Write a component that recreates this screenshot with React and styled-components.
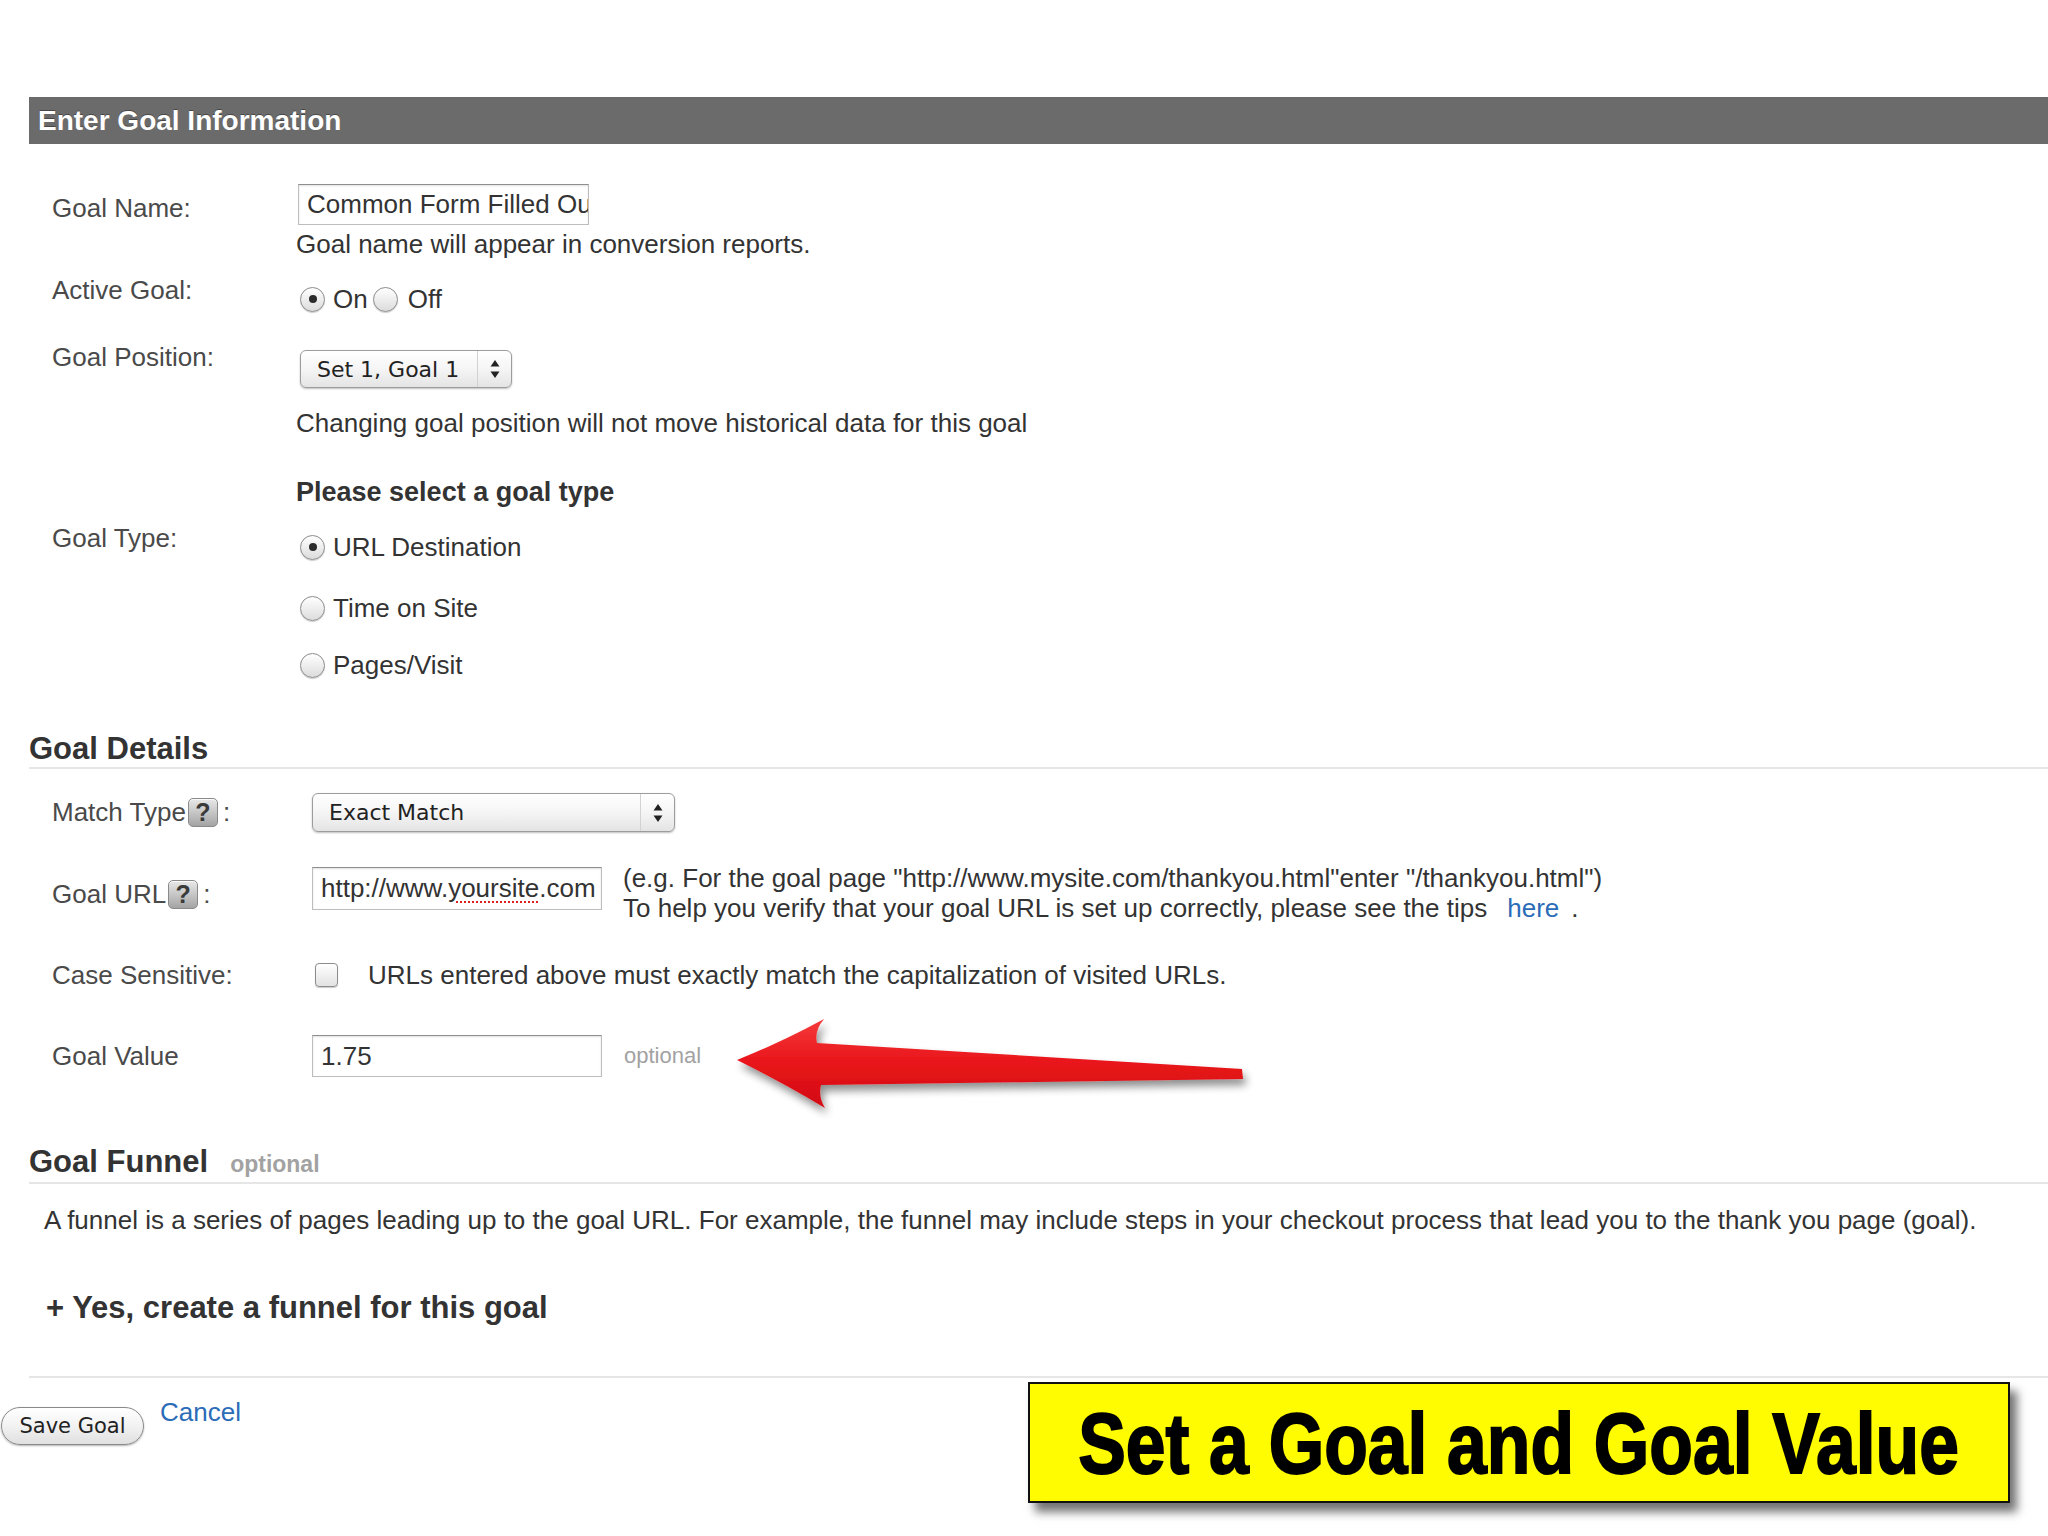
import React from 'react';
import styled, { createGlobalStyle } from 'styled-components';

const GlobalStyle = createGlobalStyle`
  html, body {
    margin: 0;
    padding: 0;
    background: #fff;
  }
  body {
    font-family: "Liberation Sans", Arial, sans-serif;
    color: #333;
  }
  * {
    box-sizing: border-box;
  }
`;

const Page = styled.div`
  position: relative;
  width: 2048px;
  height: 1536px;
  padding-top: 97px;
  overflow: hidden;
`;

const Content = styled.div`
  margin-left: 29px;
`;

const SectionBar = styled.div`
  height: 47px;
  background: #6b6b6b;
  color: #fff;
  font-size: 28px;
  font-weight: bold;
  display: flex;
  align-items: center;
  padding-left: 9px;
  text-shadow: 0 -1px 0 rgba(0, 0, 0, 0.35);
`;

const SectionTitle = styled.h2`
  margin: ${(p) => p.$top}px 0 0;
  font-size: 31px;
  line-height: 36px;
  font-weight: bold;
  color: #333;
  border-bottom: 2px solid #e6e6e6;
  display: flex;
  align-items: baseline;
  gap: 22px;
`;

const Optional = styled.span`
  font-size: ${(p) => (p.$bold ? 23 : 22)}px;
  font-weight: ${(p) => (p.$bold ? 'bold' : 'normal')};
  color: #a2a2a2;
`;

const Row = styled.div`
  display: grid;
  grid-template-columns: ${(p) => p.$labelWidth}px 1fr;
  margin-top: ${(p) => p.$top}px;
  padding-left: 23px;
`;

const Label = styled.div`
  display: flex;
  align-items: center;
  height: fit-content;
  padding-top: ${(p) => p.$offset || 0}px;
  font-size: 26px;
  line-height: 30px;
  color: #4a4a4a;
`;

const HelpIcon = styled.span`
  display: inline-flex;
  align-items: center;
  justify-content: center;
  width: 30px;
  height: 29px;
  margin: 2px 5px 0 2px;
  border: 1px solid #8a8a8a;
  border-radius: 5px;
  background: linear-gradient(#e8e8e8, #a4a4a4);
  box-shadow: inset 0 1px 0 rgba(255, 255, 255, 0.8);
  color: #3a3a3a;
  font-size: 25px;
  font-weight: bold;
  line-height: 1;
`;

const Control = styled.div`
  display: flex;
  flex-direction: column;
  align-items: flex-start;
`;

const Inline = styled.div`
  display: flex;
  align-items: ${(p) => p.$align || 'center'};
  margin-top: ${(p) => p.$top || 0}px;
`;

const Text = styled.div`
  margin-top: ${(p) => p.$top || 0}px;
  margin-left: ${(p) => p.$left || 0}px;
  font-size: ${(p) => p.$size || 26}px;
  line-height: ${(p) => p.$line || 30}px;
  font-weight: ${(p) => (p.$bold ? 'bold' : 'normal')};
  color: #333;
  white-space: nowrap;
`;

const Link = styled.a`
  color: #2b6cb8;
  text-decoration: none;
  margin: 0 ${(p) => p.$space || 0}px 0 ${(p) => p.$before || 0}px;
`;

const TextField = styled.div`
  display: flex;
  align-items: center;
  width: ${(p) => p.$width}px;
  height: ${(p) => p.$height}px;
  margin-left: ${(p) => p.$left || 0}px;
  padding: 0 8px;
  border: 1px solid #bdbdbd;
  border-top-color: #8e8e8e;
  box-shadow: inset 0 1px 2px rgba(0, 0, 0, 0.12);
  background: #fff;
  font-size: 26px;
  color: #333;
  white-space: nowrap;
  overflow: hidden;
`;

const Misspelled = styled.span`
  text-decoration: underline dotted #e02020;
  text-decoration-thickness: 2px;
  text-underline-offset: 4px;
`;

const Select = styled.div`
  display: flex;
  align-items: stretch;
  width: ${(p) => p.$width}px;
  height: ${(p) => p.$height}px;
  margin-top: ${(p) => p.$top || 0}px;
  margin-left: ${(p) => p.$left || 0}px;
  border: 1px solid #9c9c9c;
  border-radius: 6px;
  background: linear-gradient(#ffffff, #f5f5f5 50%, #e4e4e4);
  box-shadow: 0 1px 2px rgba(0, 0, 0, 0.25);
  font-family: "DejaVu Sans", Verdana, sans-serif;
  font-size: 22px;
  color: #222;
`;

const SelectValue = styled.span`
  flex: 1;
  display: flex;
  align-items: center;
  padding-left: 16px;
`;

const SelectArrows = styled.span`
  display: flex;
  align-items: center;
  justify-content: center;
  width: 34px;
  border-left: 1px solid #d2d2d2;
`;

const Radio = styled.span`
  display: inline-flex;
  align-items: center;
  justify-content: center;
  width: 25px;
  height: 25px;
  margin-left: ${(p) => p.$left || 0}px;
  margin-right: ${(p) => p.$right || 8}px;
  border: 1px solid #8c8c8c;
  border-radius: 50%;
  background: linear-gradient(#ffffff, #dcdcdc);
  box-shadow: 0 1px 1px rgba(0, 0, 0, 0.2);

  &::after {
    content: '';
    display: ${(p) => (p.$checked ? 'block' : 'none')};
    width: 8px;
    height: 8px;
    border-radius: 50%;
    background: #2b2b2b;
  }
`;

const Checkbox = styled.span`
  display: inline-block;
  width: 23px;
  height: 24px;
  margin-left: 3px;
  margin-right: 30px;
  border: 1px solid #8c8c8c;
  border-radius: 4px;
  background: linear-gradient(#ffffff, #e2e2e2);
  box-shadow: 0 1px 1px rgba(0, 0, 0, 0.2);
`;

const RadioLabel = styled.span`
  font-size: 26px;
  line-height: 30px;
  color: #333;
  margin-right: ${(p) => p.$right || 0}px;
`;

const Paragraph = styled.p`
  margin: ${(p) => p.$top}px 0 0;
  padding-left: ${(p) => p.$left}px;
  font-size: ${(p) => p.$size || 26}px;
  line-height: ${(p) => p.$line || 30}px;
  font-weight: ${(p) => (p.$bold ? 'bold' : 'normal')};
  color: #333;
  white-space: nowrap;
`;

const Divider = styled.hr`
  margin: ${(p) => p.$top}px 0 0;
  border: 0;
  border-top: 2px solid #e6e6e6;
`;

const Footer = styled.div`
  display: flex;
  align-items: flex-start;
  gap: 16px;
  margin-top: 29px;
  padding-left: 1px;
`;

const Button = styled.button`
  width: 143px;
  height: 38px;
  padding: 0;
  border: 1px solid #8a8a8a;
  border-radius: 19px;
  background: linear-gradient(#ffffff, #f2f2f2 50%, #e0e0e0);
  box-shadow: 0 1px 2px rgba(0, 0, 0, 0.3);
  font-family: "DejaVu Sans", Verdana, sans-serif;
  font-size: 21px;
  color: #222;
`;

const CancelLink = styled(Link)`
  margin-top: -10px;
  font-size: 26px;
  line-height: 30px;
`;

const ArrowOverlay = styled.svg`
  position: absolute;
  left: 720px;
  top: 1000px;
  width: 540px;
  height: 130px;
  overflow: visible;
`;

const Callout = styled.div`
  position: absolute;
  left: 1028px;
  top: 1382px;
  width: 982px;
  height: 121px;
  display: flex;
  align-items: center;
  justify-content: center;
  background: #fffb00;
  border: 2px solid #111;
  box-shadow: 7px 9px 9px rgba(0, 0, 0, 0.55);
`;

const CalloutText = styled.span`
  display: inline-block;
  font-family: "Liberation Sans", Arial, sans-serif;
  font-size: 86px;
  font-weight: bold;
  line-height: 1;
  color: #000;
  -webkit-text-stroke: 2px #000;
  transform: scaleX(0.83);
  white-space: nowrap;
`;

const UpDown = () => (
  <svg width="12" height="22" viewBox="0 0 12 22">
    <path d="M6 2 L10.5 8.5 H1.5 Z" fill="#222" />
    <path d="M6 20 L10.5 13.5 H1.5 Z" fill="#222" />
  </svg>
);

const RedArrow = () => (
  <ArrowOverlay viewBox="720 1000 540 130">
    <defs>
      <filter id="arrowShadow" x="-10%" y="-30%" width="130%" height="170%">
        <feGaussianBlur in="SourceAlpha" stdDeviation="4" />
        <feOffset dx="3" dy="6" result="blur" />
        <feComponentTransfer>
          <feFuncA type="linear" slope="0.45" />
        </feComponentTransfer>
        <feMerge>
          <feMergeNode />
          <feMergeNode in="SourceGraphic" />
        </feMerge>
      </filter>
      <linearGradient id="arrowFill" x1="0" y1="0" x2="0" y2="1">
        <stop offset="0" stopColor="#f53b3b" />
        <stop offset="0.5" stopColor="#e8141a" />
        <stop offset="1" stopColor="#d10d12" />
      </linearGradient>
    </defs>
    <path
      filter="url(#arrowShadow)"
      fill="url(#arrowFill)"
      d="M737 1060 Q782 1042 824 1019 Q814 1031 817 1043 L1242 1069 L1243 1079 L821 1085 Q818 1097 825 1108 Q782 1082 737 1060 Z"
    />
  </ArrowOverlay>
);

export default function App() {
  return (
    <>
      <GlobalStyle />
      <Page>
        <Content>
          <SectionBar>Enter Goal Information</SectionBar>

          <Row $labelWidth={244} $top={40}>
            <Label $offset={9}>Goal Name:</Label>
            <Control>
              <TextField $width={291} $height={41} $left={2}>
                Common Form Filled Out
              </TextField>
              <Text $top={4}>Goal name will appear in conversion reports.</Text>
            </Control>
          </Row>

          <Row $labelWidth={244} $top={16}>
            <Label>Active Goal:</Label>
            <Inline $top={9}>
              <Radio $checked $left={4} />
              <RadioLabel $right={5}>On</RadioLabel>
              <Radio $right={10} />
              <RadioLabel>Off</RadioLabel>
            </Inline>
          </Row>

          <Row $labelWidth={244} $top={28}>
            <Label>Goal Position:</Label>
            <Control>
              <Select $width={212} $height={38} $top={8} $left={4}>
                <SelectValue>Set 1, Goal 1</SelectValue>
                <SelectArrows>
                  <UpDown />
                </SelectArrows>
              </Select>
              <Text $top={20}>Changing goal position will not move historical data for this goal</Text>
            </Control>
          </Row>

          <Row $labelWidth={244} $top={39}>
            <span />
            <Text $size={27} $bold>Please select a goal type</Text>
          </Row>

          <Row $labelWidth={244} $top={16}>
            <Label>Goal Type:</Label>
            <Control>
              <Inline $top={9}>
                <Radio $checked $left={4} />
                <RadioLabel>URL Destination</RadioLabel>
              </Inline>
              <Inline $top={31}>
                <Radio $left={4} />
                <RadioLabel>Time on Site</RadioLabel>
              </Inline>
              <Inline $top={27}>
                <Radio $left={4} />
                <RadioLabel>Pages/Visit</RadioLabel>
              </Inline>
            </Control>
          </Row>

          <SectionTitle $top={51}>Goal Details</SectionTitle>

          <Row $labelWidth={260} $top={24}>
            <Label $offset={3}>
              Match Type<HelpIcon>?</HelpIcon>:
            </Label>
            <Select $width={363} $height={39}>
              <SelectValue>Exact Match</SelectValue>
              <SelectArrows>
                <UpDown />
              </SelectArrows>
            </Select>
          </Row>

          <Row $labelWidth={260} $top={35}>
            <Label $offset={11}>
              Goal URL<HelpIcon>?</HelpIcon>:
            </Label>
            <Inline $align="flex-start">
              <TextField $width={290} $height={43}>
                http://www.<Misspelled>yoursite</Misspelled>.com
              </TextField>
              <Text $left={21} $top={-4}>
                (e.g. For the goal page "http://www.mysite.com/thankyou.html"enter "/thankyou.html")
                <br />
                To help you verify that your goal URL is set up correctly, please see the tips
                <Link href="#" $before={20} $space={12}>here</Link>.
              </Text>
            </Inline>
          </Row>

          <Row $labelWidth={260} $top={37}>
            <Label>Case Sensitive:</Label>
            <Inline>
              <Checkbox />
              <RadioLabel>URLs entered above must exactly match the capitalization of visited URLs.</RadioLabel>
            </Inline>
          </Row>

          <Row $labelWidth={260} $top={45}>
            <Label $offset={6}>Goal Value</Label>
            <Inline>
              <TextField $width={290} $height={42}>1.75</TextField>
              <Text $left={22} $size={22}>
                <Optional>optional</Optional>
              </Text>
            </Inline>
          </Row>

          <SectionTitle $top={67}>
            Goal Funnel <Optional $bold>optional</Optional>
          </SectionTitle>

          <Paragraph $top={21} $left={15}>
            A funnel is a series of pages leading up to the goal URL. For example, the funnel may include steps in your checkout process that lead you to the thank you page (goal).
          </Paragraph>

          <Paragraph $top={55} $left={17} $size={31} $line={36} $bold>
            + Yes, create a funnel for this goal
          </Paragraph>

          <Divider $top={50} />
        </Content>

        <Footer>
          <Button type="button">Save Goal</Button>
          <CancelLink href="#">Cancel</CancelLink>
        </Footer>

        <RedArrow />

        <Callout>
          <CalloutText>Set a Goal and Goal Value</CalloutText>
        </Callout>
      </Page>
    </>
  );
}
